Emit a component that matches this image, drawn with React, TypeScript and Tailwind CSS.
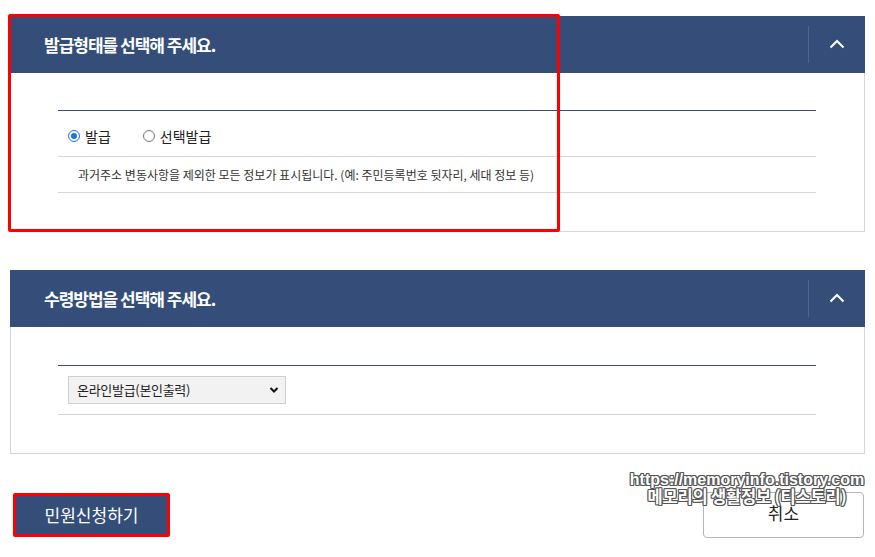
import React from "react";

const KR = { fontFamily: '"Noto Sans CJK KR", "Noto Sans", sans-serif' };

function Chevron() {
  return (
    <svg width="16" height="10" viewBox="0 0 16 10" fill="none">
      <path d="M1.5 8.5 L8 2 L14.5 8.5" stroke="white" strokeWidth="2" />
    </svg>
  );
}

function Header({ title }: { title: string }) {
  return (
    <div className="flex h-[57px] items-center bg-[#344e79]">
      <div className="flex-1 pl-[34px] text-[17px] font-bold tracking-[-1px] text-white">{title}</div>
      <div className="h-[37px] w-px bg-[#4d6590]" />
      <div className="flex w-[56px] items-center justify-center pb-[2px]">
        <Chevron />
      </div>
    </div>
  );
}

export default function App() {
  return (
    <div className="relative h-[557px] w-[875px] overflow-hidden bg-white" style={KR}>
      <div className="ml-[10px] w-[855px] pt-[16px]">
        {/* panel 1 */}
        <div>
          <Header title="발급형태를 선택해 주세요." />
          <div className="border-x border-b border-[#d6d6d6] pl-[47px] pr-[48px] pt-[37px] pb-[38px]">
            <div className="border-t border-[#344e79]">
              <div className="flex h-[46px] items-center border-b border-[#d6d6d6] pl-[10px] pt-[5px] text-[14px] text-[#222]">
                <label className="flex items-center">
                  <span className="mr-[5px] flex h-[12px] w-[12px] items-center justify-center rounded-full border-[1.5px] border-[#1a73e8]">
                    <span className="h-[6px] w-[6px] rounded-full bg-[#1a73e8]" />
                  </span>
                  발급
                </label>
                <label className="ml-[32px] flex items-center">
                  <span className="mr-[5px] h-[12px] w-[12px] rounded-full border border-[#777]" />
                  선택발급
                </label>
              </div>
              <div className="flex h-[36px] items-center border-b border-[#d6d6d6] pl-[20px] text-[12px] tracking-[0px] text-[#333]">
                과거주소 변동사항을 제외한 모든 정보가 표시됩니다. (예: 주민등록번호 뒷자리, 세대 정보 등)
              </div>
            </div>
          </div>
        </div>

        {/* panel 2 */}
        <div className="mt-[38px]">
          <Header title="수령방법을 선택해 주세요." />
          <div className="border-x border-b border-[#d6d6d6] pl-[47px] pr-[48px] pt-[38px] pb-[38px]">
            <div className="border-t border-[#344e79]">
              <div className="flex h-[49px] items-center border-b border-[#d6d6d6] pl-[10px]">
                <div className="flex h-[28px] w-[218px] items-center justify-between border border-[#d0d0d0] bg-[#f2f2f2] pl-[8px] pr-[6px] text-[13px] text-[#222]">
                  <span className="tracking-[-0.3px]">온라인발급(본인출력)</span>
                  <svg width="10" height="8" viewBox="0 0 10 8">
                    <path d="M1.5 2 L5 5.5 L8.5 2" stroke="#111" strokeWidth="2" fill="none" />
                  </svg>
                </div>
              </div>
            </div>
          </div>
        </div>

        {/* buttons */}
        <div className="mt-[38px] flex items-start justify-between">
          <button className="ml-[3px] mt-[1px] flex h-[44px] w-[157px] items-center justify-center rounded-[2px] border-[3px] border-[#ff0000] bg-[#344e79] text-[17px] text-white">
            민원신청하기
          </button>
          <button className="mr-[1px] flex h-[46px] w-[161px] items-center justify-center rounded-[4px] border border-[#b5b5b5] bg-white pb-[4px] text-[17px] text-[#222]">
            취소
          </button>
        </div>
      </div>

      {/* annotation box */}
      <div className="pointer-events-none absolute left-[8px] top-[14px] h-[218px] w-[552px] rounded-[2px] border-[3px] border-[#ff0000]" />

      {/* watermark */}
      <div
        className="pointer-events-none absolute left-[622px] top-[471px] w-[250px] text-center font-bold leading-[17px] text-white"
        style={{
          textShadow:
            "1px 0 0 #555, -1px 0 0 #555, 0 1px 0 #555, 0 -1px 0 #555, 1px 1px 0 #555, -1px -1px 0 #555, 1px -1px 0 #555, -1px 1px 0 #555",
        }}
      >
        <div className="text-[16px] tracking-[0px]" style={{ fontFamily: '"Liberation Sans", Arial, sans-serif' }}>
          https://memoryinfo.tistory.com
        </div>
        <div className="text-[16.5px] tracking-[-0.2px]">메모리의 생활정보 (티스토리)</div>
      </div>
    </div>
  );
}
